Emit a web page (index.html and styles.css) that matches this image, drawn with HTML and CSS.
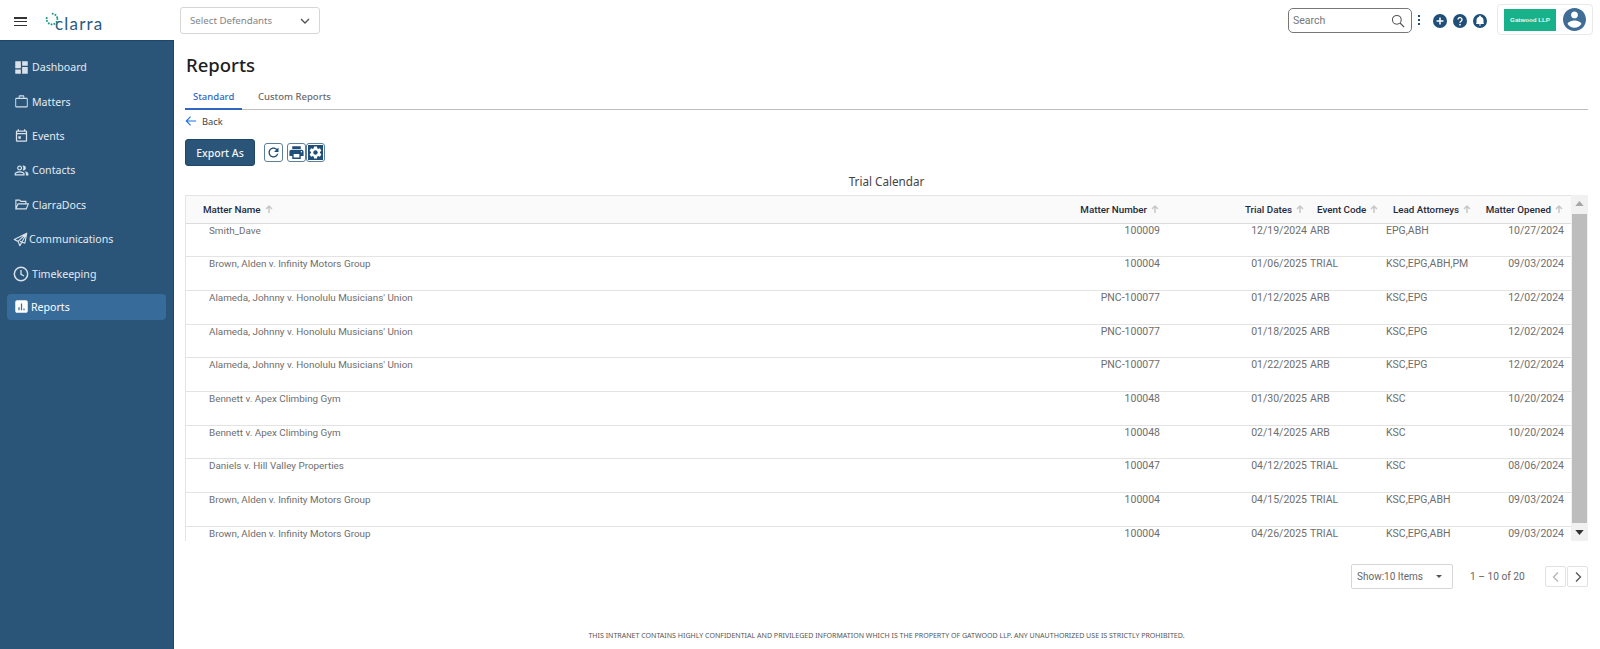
FILE: index.html
```html
<!DOCTYPE html>
<html lang="en">
<head>
<meta charset="utf-8">
<title>Reports - Clarra</title>
<link rel="stylesheet" href="styles.css">
</head>
<body>
<header class="topbar">
  <div class="brand">
    <button class="burger" aria-label="Menu"><span></span><span></span><span></span></button>
    <div class="logo">
      <svg class="logo-ring" viewBox="0 0 14 14"><circle cx="7" cy="7" r="5.400" fill="none" stroke="#1f9d8b" stroke-width="2" stroke-linecap="round" stroke-dasharray="0.1 2.8 0.1 2.8 0.1 2.8 0.1 2.8 0.1 2.8 0.1 2.8 0.1 8"/></svg>
      <span class="logo-text">clarra</span>
    </div>
  </div>
  <div class="defendants"><span>Select Defendants</span>
    <svg viewBox="0 0 12 12" class="chev"><path d="M2 4l4 4 4-4" fill="none" stroke="#555" stroke-width="1.400"/></svg>
  </div>
  <div class="top-right">
    <div class="search"><span>Search</span>
      <svg viewBox="0 0 24 24" class="search-ico"><circle cx="10" cy="10" r="7.500" fill="none" stroke="#555" stroke-width="1.800"/><path d="M15.500 15.500l7 7" stroke="#555" stroke-width="2.200"/></svg>
    </div>
    <div class="kebab"><i></i><i></i><i></i></div>
    <div class="round-icons">
      <svg viewBox="0 0 24 24"><circle cx="12" cy="12" r="12" fill="#1f4e79"/><path d="M12 6v12M6 12h12" stroke="#fff" stroke-width="2.600"/></svg>
      <svg viewBox="0 0 24 24"><circle cx="12" cy="12" r="12" fill="#1f4e79"/><path d="M8.600 9.400a3.400 3.400 0 1 1 5.400 2.800c-1.300.9-2 1.500-2 3" fill="none" stroke="#fff" stroke-width="2.400"/><circle cx="12" cy="18.400" r="1.500" fill="#fff"/></svg>
      <svg viewBox="0 0 24 24"><circle cx="12" cy="12" r="12" fill="#1f4e79"/><path d="M12 20a2 2 0 0 0 2-2h-4a2 2 0 0 0 2 2zm6-4.500v-5c0-3-1.600-5.200-4.500-5.800V4a1.500 1.500 0 0 0-3 0v.7C7.600 5.300 6 7.500 6 10.500v5L5 17h14z" fill="#fff"/></svg>
    </div>
    <div class="org">
      <div class="org-logo">Gatwood LLP</div>
      <svg viewBox="2 2 20 20" class="avatar"><path fill="#3f6d96" d="M12 2C6.480 2 2 6.480 2 12s4.480 10 10 10 10-4.480 10-10S17.520 2 12 2zm0 3c1.660 0 3 1.340 3 3s-1.340 3-3 3-3-1.340-3-3 1.340-3 3-3zm0 14.200c-2.500 0-4.710-1.280-6-3.220.03-1.990 4-3.080 6-3.080 1.990 0 5.970 1.090 6 3.080-1.290 1.940-3.500 3.220-6 3.220z"/></svg>
    </div>
  </div>
</header>

<div class="shell">
  <nav class="sidebar">
    <a class="nav-item"><svg viewBox="0 0 24 24"><path fill="#d9e2ea" d="M2 13h9V2H2v11zm0 9h9v-7H2v7zm11 0h9V11h-9v11zm0-20v7h9V2h-9z"/></svg>Dashboard</a>
    <a class="nav-item"><svg viewBox="0 0 24 24"><path fill="#d9e2ea" d="M15 6V4H9v2h6zM3.500 8v11.500h17V8h-17zM20 6c1.110 0 2 .89 2 2v11.500c0 1.110-.89 2-2 2H4c-1.110 0-2-.89-2-2L2.010 8c0-1.110.88-2 1.990-2h3.500V4c0-1.110.89-2 2-2h5c1.110 0 2 .89 2 2v2H20z"/></svg>Matters</a>
    <a class="nav-item"><svg viewBox="0 0 24 24"><path fill="#d9e2ea" d="M19 4h-1V2h-2v2H8V2H6v2H5c-1.100 0-2 .9-2 2v14c0 1.100.9 2 2 2h14c1.100 0 2-.9 2-2V6c0-1.100-.9-2-2-2zm0 16H5V10h14v10zm0-12H5V6h14v2zM7 13h4v4H7z"/></svg>Events</a>
    <a class="nav-item"><svg viewBox="0 0 24 24"><path fill="#d9e2ea" d="M16.670 13.130C18.040 14.060 19 15.320 19 17v3h4v-3c0-2.180-3.570-3.470-6.330-3.870zM15 12c2.210 0 4-1.790 4-4s-1.790-4-4-4c-.47 0-.91.1-1.330.24C14.500 5.270 15 6.580 15 8s-.5 2.730-1.330 3.760c.42.14.86.24 1.330.24zM9 12c2.210 0 4-1.790 4-4s-1.790-4-4-4-4 1.790-4 4 1.790 4 4 4zm0-6c1.100 0 2 .9 2 2s-.9 2-2 2-2-.9-2-2 .9-2 2-2zM9 13c-2.670 0-8 1.340-8 4v3h16v-3c0-2.660-5.330-4-8-4zm6 5H3v-.99C3.200 16.290 6.300 15 9 15s5.800 1.290 6 2v1z"/></svg>Contacts</a>
    <a class="nav-item"><svg viewBox="0 0 24 24"><path fill="none" stroke="#d9e2ea" stroke-width="1.800" d="M3 19V5h6l2 2h8v4M3 19l3.500-8H23l-3.500 8z"/></svg>ClarraDocs</a>
    <a class="nav-item tight"><svg viewBox="0 0 24 24"><path fill="none" stroke="#d9e2ea" stroke-width="1.800" stroke-linejoin="round" d="M22 2L2 12l6 3 3 7zM22 2L8 15M22 2l-3 16-8-3"/></svg>Communications</a>
    <a class="nav-item wide"><svg viewBox="0 0 24 24"><circle cx="12" cy="12" r="10" fill="none" stroke="#d9e2ea" stroke-width="2.200"/><path d="M12 6v6.500l4.500 2.500" fill="none" stroke="#d9e2ea" stroke-width="2"/></svg>Timekeeping</a>
    <a class="nav-item active"><svg viewBox="0 0 24 24"><path fill="#fff" d="M19 2H5C3.300 2 2 3.300 2 5v14c0 1.700 1.300 3 3 3h14c1.700 0 3-1.300 3-3V5c0-1.700-1.300-3-3-3zM9 18H7v-5h2v5zm4 0h-2V7h2v11zm4 0h-2v-3h2v3z"/></svg>Reports</a>
  </nav>

  <main class="content">
    <h1 class="page-title">Reports</h1>
    <div class="tabs">
      <a class="tab current">Standard</a>
      <a class="tab">Custom Reports</a>
    </div>
    <a class="back"><svg viewBox="0 0 14 14"><path d="M13 7H1.500M6.500 2L1.500 7l5 5" fill="none" stroke="#1a73e8" stroke-width="1.300"/></svg>Back</a>
    <div class="actions">
      <button class="export">Export As</button>
      <div class="tools">
        <span class="tool"><svg viewBox="0 0 24 24"><path fill="#1f4e79" d="M17.650 6.350C16.200 4.900 14.210 4 12 4c-4.420 0-7.990 3.580-7.990 8s3.570 8 7.990 8c3.730 0 6.840-2.550 7.730-6h-2.080c-.82 2.330-3.040 4-5.650 4-3.310 0-6-2.690-6-6s2.690-6 6-6c1.660 0 3.140.69 4.220 1.780L13 11h7V4l-2.350 2.350z"/></svg></span>
        <span class="tool joined print"><svg viewBox="0 0 24 24"><path fill="#1f4e79" d="M19 8H5c-1.660 0-3 1.340-3 3v6h4v4h12v-4h4v-6c0-1.660-1.340-3-3-3zm-3 11H8v-5h8v5zm3-7c-.55 0-1-.45-1-1s.45-1 1-1 1 .45 1 1-.45 1-1 1zm-1-9H6v4h12V3z"/></svg></span>
        <span class="tool joined gear"><svg viewBox="0 0 24 24"><rect x="0" y="0" width="24" height="24" fill="#1f4e79"/><path fill="#fff" d="M19.140 12.940c.04-.3.06-.61.06-.94 0-.32-.02-.64-.07-.94l2.030-1.580c.18-.14.23-.41.12-.61l-1.920-3.320c-.12-.22-.37-.29-.59-.22l-2.390.96c-.5-.38-1.030-.7-1.620-.94l-.36-2.540c-.04-.24-.24-.41-.48-.41h-3.840c-.24 0-.43.17-.47.41l-.36 2.540c-.59.24-1.130.57-1.620.94l-2.390-.96c-.22-.08-.47 0-.59.22L2.740 8.870c-.12.21-.08.47.12.61l2.030 1.580c-.05.3-.09.63-.09.94s.02.64.07.94l-2.030 1.580c-.18.14-.23.41-.12.61l1.920 3.320c.12.22.37.29.59.22l2.390-.96c.5.38 1.030.7 1.620.94l.36 2.540c.05.24.24.41.48.41h3.840c.24 0 .44-.17.47-.41l.36-2.540c.59-.24 1.130-.56 1.620-.94l2.390.96c.22.08.47 0 .59-.22l1.920-3.320c.12-.22.07-.47-.12-.61l-2.010-1.580zM12 15.600c-1.980 0-3.600-1.620-3.600-3.600s1.620-3.600 3.600-3.600 3.600 1.620 3.600 3.600-1.620 3.600-3.600 3.600z"/></svg></span>
      </div>
    </div>
    <div class="report-title">Trial Calendar</div>

    <div class="grid-wrap">
      <div class="grid-view">
        <table class="grid">
          <colgroup><col class="c-name"><col class="c-num"><col class="c-trial"><col class="c-code"><col class="c-lead"><col class="c-open"></colgroup>
          <thead>
            <tr>
              <th class="name">Matter Name<svg class="sort" viewBox="0 0 10 10"><path d="M5 9V2M2 5l3-3 3 3" fill="none" stroke="#c8c8c8" stroke-width="1.500"/></svg></th>
              <th class="right">Matter Number<svg class="sort" viewBox="0 0 10 10"><path d="M5 9V2M2 5l3-3 3 3" fill="none" stroke="#c8c8c8" stroke-width="1.500"/></svg></th>
              <th class="right trial">Trial Dates<svg class="sort" viewBox="0 0 10 10"><path d="M5 9V2M2 5l3-3 3 3" fill="none" stroke="#c8c8c8" stroke-width="1.500"/></svg></th>
              <th class="left">Event Code<svg class="sort" viewBox="0 0 10 10"><path d="M5 9V2M2 5l3-3 3 3" fill="none" stroke="#c8c8c8" stroke-width="1.500"/></svg></th>
              <th class="left">Lead Attorneys<svg class="sort" viewBox="0 0 10 10"><path d="M5 9V2M2 5l3-3 3 3" fill="none" stroke="#c8c8c8" stroke-width="1.500"/></svg></th>
              <th class="right last">Matter Opened<svg class="sort" viewBox="0 0 10 10"><path d="M5 9V2M2 5l3-3 3 3" fill="none" stroke="#c8c8c8" stroke-width="1.500"/></svg></th>
            </tr>
          </thead>
          <tbody>
            <tr><td class="name">Smith_Dave</td><td class="right">100009</td><td class="right trial">12/19/2024</td><td>ARB</td><td>EPG,ABH</td><td class="right last">10/27/2024</td></tr>
            <tr><td class="name">Brown, Alden v. Infinity Motors Group</td><td class="right">100004</td><td class="right trial">01/06/2025</td><td>TRIAL</td><td>KSC,EPG,ABH,PM</td><td class="right last">09/03/2024</td></tr>
            <tr><td class="name">Alameda, Johnny v. Honolulu Musicians' Union</td><td class="right">PNC-100077</td><td class="right trial">01/12/2025</td><td>ARB</td><td>KSC,EPG</td><td class="right last">12/02/2024</td></tr>
            <tr><td class="name">Alameda, Johnny v. Honolulu Musicians' Union</td><td class="right">PNC-100077</td><td class="right trial">01/18/2025</td><td>ARB</td><td>KSC,EPG</td><td class="right last">12/02/2024</td></tr>
            <tr><td class="name">Alameda, Johnny v. Honolulu Musicians' Union</td><td class="right">PNC-100077</td><td class="right trial">01/22/2025</td><td>ARB</td><td>KSC,EPG</td><td class="right last">12/02/2024</td></tr>
            <tr><td class="name">Bennett v. Apex Climbing Gym</td><td class="right">100048</td><td class="right trial">01/30/2025</td><td>ARB</td><td>KSC</td><td class="right last">10/20/2024</td></tr>
            <tr><td class="name">Bennett v. Apex Climbing Gym</td><td class="right">100048</td><td class="right trial">02/14/2025</td><td>ARB</td><td>KSC</td><td class="right last">10/20/2024</td></tr>
            <tr><td class="name">Daniels v. Hill Valley Properties</td><td class="right">100047</td><td class="right trial">04/12/2025</td><td>TRIAL</td><td>KSC</td><td class="right last">08/06/2024</td></tr>
            <tr><td class="name">Brown, Alden v. Infinity Motors Group</td><td class="right">100004</td><td class="right trial">04/15/2025</td><td>TRIAL</td><td>KSC,EPG,ABH</td><td class="right last">09/03/2024</td></tr>
            <tr><td class="name">Brown, Alden v. Infinity Motors Group</td><td class="right">100004</td><td class="right trial">04/26/2025</td><td>TRIAL</td><td>KSC,EPG,ABH</td><td class="right last">09/03/2024</td></tr>
          </tbody>
        </table>
      </div>
      <div class="scrollbar">
        <svg class="sb-arrow" viewBox="0 0 10 6"><path d="M5 0l5 6H0z" fill="#a6a6a6"/></svg>
        <div class="sb-thumb"></div>
        <svg class="sb-arrow" viewBox="0 0 10 6"><path d="M0 0h10L5 6z" fill="#333"/></svg>
      </div>
    </div>

    <div class="pager">
      <div class="page-size"><span>Show:10 Items</span><i class="caret"></i></div>
      <div class="page-info">1 – 10 of 20</div>
      <div class="page-btns">
        <span class="page-btn"><svg viewBox="0 0 12 12"><path d="M8 1.500L3.500 6 8 10.500" fill="none" stroke="#b5b5b5" stroke-width="1.300"/></svg></span>
        <span class="page-btn"><svg viewBox="0 0 12 12"><path d="M4 1.500L8.500 6 4 10.500" fill="none" stroke="#555" stroke-width="1.300"/></svg></span>
      </div>
    </div>
    <footer class="legal">THIS INTRANET CONTAINS HIGHLY CONFIDENTIAL AND PRIVILEGED INFORMATION WHICH IS THE PROPERTY OF GATWOOD LLP. ANY UNAUTHORIZED USE IS STRICTLY PROHIBITED.</footer>
  </main>
</div>
</body>
</html>
```

FILE: styles.css
```css
* { box-sizing: border-box; }
html, body { margin: 0; height: 100%; overflow: hidden; background: #fff; }
body { font-family: "Noto Sans", "Open Sans", sans-serif; color: #333; display: flex; flex-direction: column; }

.topbar { height: 40px; flex: none; display: flex; align-items: flex-start; padding-right: 7px; background: #fff; }
.brand { width: 180px; flex: none; display: flex; align-items: flex-start; }
.burger { width: 13px; height: 9px; margin: 17px 0 0 14px; padding: 0; border: 0; background: none; display: flex; flex-direction: column; justify-content: space-between; }
.burger span { display: block; height: 1.500px; background: #333; }
.logo { position: relative; margin: 12px 0 0 19px; width: 56px; height: 22px; }
.logo-ring { position: absolute; left: -1px; top: 0; width: 14px; height: 14px; }
.logo-text { position: absolute; left: 9px; top: 1px; font-family: "Lato", sans-serif; font-size: 17px; line-height: 22px; letter-spacing: 1.200px; color: #2b5a7e; }

.defendants { margin-top: 7px; width: 140px; height: 27px; border: 1px solid #d6d6d6; border-radius: 3px; display: flex; align-items: center; justify-content: space-between; padding: 0 5px 0 9px; font-size: 9.700px; color: #858585; }
.chev { width: 12px; height: 12px; margin-right: 3px; }

.top-right { margin-left: auto; display: flex; align-items: flex-start; }
.search { margin-top: 8px; width: 124px; height: 25px; border: 1px solid #777; border-radius: 5px; display: flex; align-items: center; justify-content: space-between; padding: 0 6px 0 4px; font-family: "Roboto", sans-serif; font-size: 10.500px; color: #777; }
.search-ico { width: 14px; height: 14px; }
.kebab { margin: 15px 0 0 6px; width: 3px; display: flex; flex-direction: column; gap: 2px; }
.kebab i { display: block; width: 2px; height: 2px; background: #1f4e79; }
.round-icons { margin: 14px 0 0 12px; display: flex; gap: 6px; }
.round-icons svg { width: 14px; height: 14px; display: block; }
.org { margin: 4px 0 0 10px; width: 96px; height: 31px; border: 1px solid #e9e9e9; border-radius: 4px; display: flex; align-items: center; padding-left: 6px; gap: 7px; }
.org-logo { width: 52px; height: 22px; background: #17b18a; color: #e8f7f2; font-family: "Liberation Sans", sans-serif; font-size: 6.200px; font-weight: 700; line-height: 22px; text-align: center; white-space: nowrap; }
.avatar { width: 23px; height: 23px; }

.shell { flex: 1; display: flex; min-height: 0; }
.sidebar { width: 174px; flex: none; background: #2a5578; border-right: 1px solid #1f4668; border-top: 1px solid #1f4668; padding-top: 9px; }
.nav-item { display: flex; align-items: center; height: 34.400px; padding-left: 14px; gap: 3px; color: #e4ebf1; font-size: 10.600px; }
.nav-item svg { width: 15px; height: 15px; flex: none; }
.nav-item.tight { padding-left: 13px; gap: 1px; }
.nav-item.wide svg { width: 16px; height: 16px; }
.nav-item.wide { gap: 3px; padding-left: 13px; }
.nav-item.active { margin: 0 7px; padding-left: 7px; height: 26px; margin-top: 3px; background: #366b9a; border-radius: 4px; color: #fff; gap: 2px; }

.content { flex: 1; min-width: 0; padding: 0 12px 0 11px; display: flex; flex-direction: column; }
.page-title { margin: 10px 0 0 1px; font-size: 18.500px; font-weight: 500; line-height: 29px; color: #1d1d1d; }
.tabs { margin-top: 7px; height: 24px; display: flex; border-bottom: 1px solid #bdbdbd; }
.tab { height: 24px; padding: 4px 8px 0; margin-right: 8px; font-size: 9.500px; line-height: 14px; font-weight: 500; color: #6b6b6b; width: 57px; white-space: nowrap; }
.tab.current { color: #2f66c4; border-bottom: 2px solid #2f66c4; }
.back { display: flex; align-items: center; gap: 5px; margin-top: 4px; height: 14px; font-size: 9.300px; color: #444; }
.back svg { width: 12px; height: 12px; }
.actions { margin-top: 11px; display: flex; align-items: center; }
.export { width: 70px; height: 27px; padding: 0; border: 1px solid #1f4668; border-radius: 3px; background: #2a5578; color: #f2f5f8; font-family: "Noto Sans", sans-serif; font-size: 10.500px; font-weight: 500; }
.tools { display: flex; margin-left: 9px; }
.tool { width: 19px; height: 19px; border: 1px solid #5d7f9c; border-radius: 3px; display: flex; align-items: center; justify-content: center; background: #fff; margin-right: 4px; overflow: hidden; }
.tool svg { width: 15px; height: 15px; display: block; flex: none; }
.tool.joined { margin-right: 0; }
.tool.print svg { width: 17px; height: 17px; }
.tool.gear svg { width: 15px; height: 15px; }
.report-title { margin-top: 6px; height: 23px; text-align: center; font-size: 11.700px; line-height: 18px; color: #444; }

.grid-wrap { display: flex; height: 346px; flex: none; }
.grid-view { flex: 1; min-width: 0; overflow: hidden; border-top: 1px solid #e4e4e4; border-left: 1px solid #e4e4e4; }
.grid { width: 100%; table-layout: fixed; border-collapse: collapse; font-family: "Roboto", sans-serif; font-size: 10.500px; }
.c-name { width: 883px; }
.c-num { width: 97px; }
.c-trial { width: 144px; }
.c-code { width: 76px; }
.c-lead { width: 94px; }
.grid th { height: 27px; background: #fafafa; border-bottom: 1px solid #dcdcdc; padding: 0 6px 0 0; font-size: 9.800px; font-weight: 500; color: #1f2a3a; white-space: nowrap; }
.grid th .sort { width: 10px; height: 10px; margin-left: 3px; vertical-align: -1px; }
.grid th.name { text-align: left; padding-left: 17px; }
.grid th.right { text-align: right; }
.grid th.trial { padding-right: 5px; }
.grid th.left { text-align: left; padding-left: 7px; }
.grid td { height: 33.700px; padding: 0; vertical-align: top; line-height: 13px; color: #6e6e6e; border-bottom: 1px solid #e3e3e3; white-space: nowrap; }
.grid td.name { padding-left: 23px; font-size: 9.900px; }
.grid td.right { text-align: right; padding-right: 6px; }
.grid td.trial { padding-right: 3px; }
.grid td.last, .grid th.last { padding-right: 7px; }

.scrollbar { width: 17px; flex: none; background: #f1f1f1; display: flex; flex-direction: column; align-items: center; }
.sb-arrow { width: 9px; height: 5px; margin: 6px 0; flex: none; }
.sb-thumb { flex: 1; width: 15px; margin-top: 2px; margin-bottom: 1px; background: #bdbdbd; }

.pager { margin-top: 23px; display: flex; align-items: center; font-family: "Roboto", sans-serif; font-size: 10px; color: #666; }
.page-size { margin-left: auto; width: 102px; height: 25px; border: 1px solid #d6d6d6; border-radius: 2px; display: flex; align-items: center; justify-content: space-between; padding: 0 10px 0 5px; }
.caret { width: 0; height: 0; border-left: 3.500px solid transparent; border-right: 3.500px solid transparent; border-top: 3.500px solid #555; }
.page-info { margin-left: 17px; width: 75px; font-size: 10.200px; }
.page-btns { display: flex; gap: 1px; }
.page-btn { width: 21px; height: 21px; border: 1px solid #e2e2e2; border-radius: 2px; display: flex; align-items: center; justify-content: center; }
.page-btn svg { width: 12px; height: 12px; }
.legal { margin-top: auto; height: 19px; text-align: center; font-size: 7.050px; line-height: 10px; color: #555; white-space: nowrap; }
```
